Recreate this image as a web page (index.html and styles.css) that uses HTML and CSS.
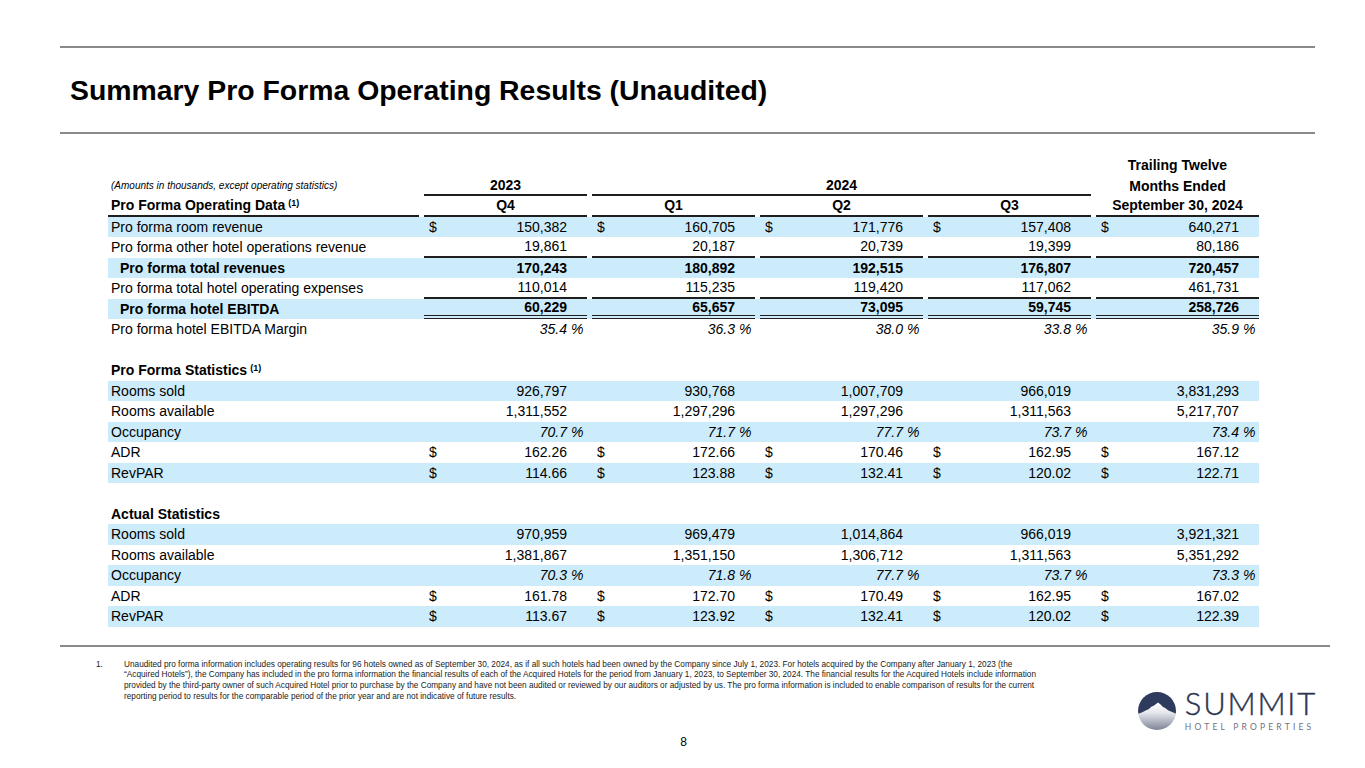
FILE: index.html
```html
<!DOCTYPE html>
<html lang="en">
<head>
<meta charset="utf-8">
<title>Summary Pro Forma Operating Results (Unaudited)</title>
<link rel="stylesheet" href="styles.css">
</head>
<body>
<div class="page">
  <div class="rule rule-top"></div>
  <h1 class="title">Summary Pro Forma Operating Results (Unaudited)</h1>
  <div class="rule"></div>

  <div class="table">
    <div class="row head">
      <div class="c lbl"></div>
      <div class="c"></div><div class="c"></div><div class="c"></div><div class="c"></div>
      <div class="c ctr b">Trailing Twelve</div>
    </div>
    <div class="row head">
      <div class="c lbl note">(Amounts in thousands, except operating statistics)</div>
      <div class="c ctr b line">2023</div>
      <div class="c ctr b line span3">2024</div>
      <div class="c ctr b">Months Ended</div>
    </div>
    <div class="row head">
      <div class="c lbl b line">Pro Forma Operating Data<sup>(1)</sup></div>
      <div class="c ctr b line">Q4</div>
      <div class="c ctr b line">Q1</div>
      <div class="c ctr b line">Q2</div>
      <div class="c ctr b line">Q3</div>
      <div class="c ctr b line">September 30, 2024</div>
    </div>

    <div class="row band">
      <div class="c lbl">Pro forma room revenue</div>
      <div class="c v"><span>$</span><span class="n">150,382</span></div>
      <div class="c v"><span>$</span><span class="n">160,705</span></div>
      <div class="c v"><span>$</span><span class="n">171,776</span></div>
      <div class="c v"><span>$</span><span class="n">157,408</span></div>
      <div class="c v"><span>$</span><span class="n">640,271</span></div>
    </div>
    <div class="row">
      <div class="c lbl">Pro forma other hotel operations revenue</div>
      <div class="c v line"><span class="n">19,861</span></div>
      <div class="c v line"><span class="n">20,187</span></div>
      <div class="c v line"><span class="n">20,739</span></div>
      <div class="c v line"><span class="n">19,399</span></div>
      <div class="c v line"><span class="n">80,186</span></div>
    </div>
    <div class="row band b">
      <div class="c lbl ind">Pro forma total revenues</div>
      <div class="c v"><span class="n">170,243</span></div>
      <div class="c v"><span class="n">180,892</span></div>
      <div class="c v"><span class="n">192,515</span></div>
      <div class="c v"><span class="n">176,807</span></div>
      <div class="c v"><span class="n">720,457</span></div>
    </div>
    <div class="row">
      <div class="c lbl">Pro forma total hotel operating expenses</div>
      <div class="c v line"><span class="n">110,014</span></div>
      <div class="c v line"><span class="n">115,235</span></div>
      <div class="c v line"><span class="n">119,420</span></div>
      <div class="c v line"><span class="n">117,062</span></div>
      <div class="c v line"><span class="n">461,731</span></div>
    </div>
    <div class="row band b">
      <div class="c lbl ind">Pro forma hotel EBITDA</div>
      <div class="c v dbl"><span class="n">60,229</span></div>
      <div class="c v dbl"><span class="n">65,657</span></div>
      <div class="c v dbl"><span class="n">73,095</span></div>
      <div class="c v dbl"><span class="n">59,745</span></div>
      <div class="c v dbl"><span class="n">258,726</span></div>
    </div>
    <div class="row">
      <div class="c lbl">Pro forma hotel EBITDA Margin</div>
      <div class="c v it"><span class="n">35.4<span class="pc">&nbsp;%</span></span></div>
      <div class="c v it"><span class="n">36.3<span class="pc">&nbsp;%</span></span></div>
      <div class="c v it"><span class="n">38.0<span class="pc">&nbsp;%</span></span></div>
      <div class="c v it"><span class="n">33.8<span class="pc">&nbsp;%</span></span></div>
      <div class="c v it"><span class="n">35.9<span class="pc">&nbsp;%</span></span></div>
    </div>

    <div class="row"></div>
    <div class="row">
      <div class="c lbl b">Pro Forma Statistics<sup>(1)</sup></div>
    </div>
    <div class="row band">
      <div class="c lbl">Rooms sold</div>
      <div class="c v"><span class="n">926,797</span></div>
      <div class="c v"><span class="n">930,768</span></div>
      <div class="c v"><span class="n">1,007,709</span></div>
      <div class="c v"><span class="n">966,019</span></div>
      <div class="c v"><span class="n">3,831,293</span></div>
    </div>
    <div class="row">
      <div class="c lbl">Rooms available</div>
      <div class="c v"><span class="n">1,311,552</span></div>
      <div class="c v"><span class="n">1,297,296</span></div>
      <div class="c v"><span class="n">1,297,296</span></div>
      <div class="c v"><span class="n">1,311,563</span></div>
      <div class="c v"><span class="n">5,217,707</span></div>
    </div>
    <div class="row band">
      <div class="c lbl">Occupancy</div>
      <div class="c v it"><span class="n">70.7<span class="pc">&nbsp;%</span></span></div>
      <div class="c v it"><span class="n">71.7<span class="pc">&nbsp;%</span></span></div>
      <div class="c v it"><span class="n">77.7<span class="pc">&nbsp;%</span></span></div>
      <div class="c v it"><span class="n">73.7<span class="pc">&nbsp;%</span></span></div>
      <div class="c v it"><span class="n">73.4<span class="pc">&nbsp;%</span></span></div>
    </div>
    <div class="row">
      <div class="c lbl">ADR</div>
      <div class="c v"><span>$</span><span class="n">162.26</span></div>
      <div class="c v"><span>$</span><span class="n">172.66</span></div>
      <div class="c v"><span>$</span><span class="n">170.46</span></div>
      <div class="c v"><span>$</span><span class="n">162.95</span></div>
      <div class="c v"><span>$</span><span class="n">167.12</span></div>
    </div>
    <div class="row band">
      <div class="c lbl">RevPAR</div>
      <div class="c v"><span>$</span><span class="n">114.66</span></div>
      <div class="c v"><span>$</span><span class="n">123.88</span></div>
      <div class="c v"><span>$</span><span class="n">132.41</span></div>
      <div class="c v"><span>$</span><span class="n">120.02</span></div>
      <div class="c v"><span>$</span><span class="n">122.71</span></div>
    </div>

    <div class="row"></div>
    <div class="row">
      <div class="c lbl b">Actual Statistics</div>
    </div>
    <div class="row band">
      <div class="c lbl">Rooms sold</div>
      <div class="c v"><span class="n">970,959</span></div>
      <div class="c v"><span class="n">969,479</span></div>
      <div class="c v"><span class="n">1,014,864</span></div>
      <div class="c v"><span class="n">966,019</span></div>
      <div class="c v"><span class="n">3,921,321</span></div>
    </div>
    <div class="row">
      <div class="c lbl">Rooms available</div>
      <div class="c v"><span class="n">1,381,867</span></div>
      <div class="c v"><span class="n">1,351,150</span></div>
      <div class="c v"><span class="n">1,306,712</span></div>
      <div class="c v"><span class="n">1,311,563</span></div>
      <div class="c v"><span class="n">5,351,292</span></div>
    </div>
    <div class="row band">
      <div class="c lbl">Occupancy</div>
      <div class="c v it"><span class="n">70.3<span class="pc">&nbsp;%</span></span></div>
      <div class="c v it"><span class="n">71.8<span class="pc">&nbsp;%</span></span></div>
      <div class="c v it"><span class="n">77.7<span class="pc">&nbsp;%</span></span></div>
      <div class="c v it"><span class="n">73.7<span class="pc">&nbsp;%</span></span></div>
      <div class="c v it"><span class="n">73.3<span class="pc">&nbsp;%</span></span></div>
    </div>
    <div class="row">
      <div class="c lbl">ADR</div>
      <div class="c v"><span>$</span><span class="n">161.78</span></div>
      <div class="c v"><span>$</span><span class="n">172.70</span></div>
      <div class="c v"><span>$</span><span class="n">170.49</span></div>
      <div class="c v"><span>$</span><span class="n">162.95</span></div>
      <div class="c v"><span>$</span><span class="n">167.02</span></div>
    </div>
    <div class="row band">
      <div class="c lbl">RevPAR</div>
      <div class="c v"><span>$</span><span class="n">113.67</span></div>
      <div class="c v"><span>$</span><span class="n">123.92</span></div>
      <div class="c v"><span>$</span><span class="n">132.41</span></div>
      <div class="c v"><span>$</span><span class="n">120.02</span></div>
      <div class="c v"><span>$</span><span class="n">122.39</span></div>
    </div>
  </div>

  <div class="rule rule-foot"></div>

  <div class="bottom">
    <div class="footnote">
      <span class="fn-num">1.</span>
      <p class="fn-text">Unaudited pro forma information includes operating results for 96 hotels owned as of September 30, 2024, as if all such hotels had been owned by the Company since July 1, 2023. For hotels acquired by the Company after January 1, 2023 (the<br>“Acquired Hotels”), the Company has included in the pro forma information the financial results of each of the Acquired Hotels for the period from January 1, 2023, to September 30, 2024. The financial results for the Acquired Hotels include information<br>provided by the third-party owner of such Acquired Hotel prior to purchase by the Company and have not been audited or reviewed by our auditors or adjusted by us. The pro forma information is included to enable comparison of results for the current<br>reporting period to results for the comparable period of the prior year and are not indicative of future results.</p>
    </div>
    <div class="logo">
      <svg class="logo-mark" width="38" height="38" viewBox="0 0 40 40" aria-hidden="true">
        <defs>
          <clipPath id="circ"><circle cx="20" cy="20" r="20"/></clipPath>
          <linearGradient id="snow" x1="0" y1="0" x2="0" y2="1">
            <stop offset="0.3" stop-color="#ffffff"/>
            <stop offset="0.55" stop-color="#e4e6ec"/>
            <stop offset="1" stop-color="#7e8497"/>
          </linearGradient>
        </defs>
        <g clip-path="url(#circ)">
          <rect width="40" height="40" fill="url(#snow)"/>
          <path d="M0 0 H40 V23 L36 21 L32 19.5 L29 17 L26 15.5 L23.5 13 L21 11 L19 12.5 L16.5 14.5 L14 15.5 L11.5 18 L8 19.5 L4 21.5 L0 23 Z" fill="#2e3b5c"/>
        </g>
      </svg>
      <div class="logo-text">
        <span class="logo-name">SUMMIT</span>
        <span class="logo-sub">HOTEL PROPERTIES</span>
      </div>
    </div>
  </div>

  <div class="pagenum">8</div>
</div>
</body>
</html>
```

FILE: styles.css
```css
* { box-sizing: border-box; }

html, body {
  margin: 0;
  padding: 0;
  background: #ffffff;
}

body {
  font-family: "Liberation Sans", Arial, sans-serif;
  color: #000000;
}

.page {
  width: 1365px;
  height: 768px;
  overflow: hidden;
}

.rule {
  margin-left: 60px;
  width: 1255px;
  border-top: 2px solid #8a8a8a;
}

.rule-top {
  margin-top: 46px;
}

.title {
  margin: 0 0 0 70px;
  height: 84px;
  display: flex;
  align-items: center;
  padding-top: 1px;
  font-size: 28.4px;
  font-weight: bold;
  letter-spacing: 0;
}

/* ---------- table ---------- */
.table {
  margin: 21px 0 0 108px;
  width: 1151px;
  font-size: 14px;
}

.row {
  display: grid;
  grid-template-columns: 311px repeat(5, 163px);
  column-gap: 5px;
  height: 20.5px;
}

.row.band {
  background: #ccebfb;
}

.c {
  display: flex;
  align-items: center;
  height: 20.5px;
  white-space: nowrap;
}

.lbl {
  padding-left: 3px;
}

.lbl.ind {
  padding-left: 12px;
}

.note {
  font-size: 10px;
  font-style: italic;
}

.b {
  font-weight: bold;
}

.ctr {
  justify-content: center;
}

.span3 {
  grid-column: 3 / 6;
}

.head .c:last-child:not(.line) {
  grid-column: 6;
}

.line {
  border-bottom: 2px solid #1f1f1f;
}

.dbl {
  border-bottom: 4px double #1f1f1f;
}

.v {
  justify-content: space-between;
  padding: 0 20px 0 5px;
}

.v .n {
  margin-left: auto;
}

.it {
  font-style: italic;
}

.pc {
  display: inline-block;
  width: 0;
  white-space: nowrap;
}

sup {
  font-size: 9px;
  font-weight: bold;
  margin-left: 3px;
  position: relative;
  top: -2px;
  vertical-align: super;
  line-height: 0;
}

.rule-foot {
  margin-top: 18px;
  width: 1270px;
}

/* ---------- bottom ---------- */
.bottom {
  display: flex;
  align-items: flex-start;
  padding-left: 96px;
  margin-top: 13px;
}

.footnote {
  display: flex;
  font-size: 8.25px;
  line-height: 10.7px;
  color: #1a1a1a;
}

.fn-num {
  width: 28px;
  flex: none;
}

.fn-text {
  margin: 0;
  white-space: nowrap;
}

.logo {
  margin-left: auto;
  margin-right: 48px;
  margin-top: 28px;
  display: flex;
  align-items: center;
  gap: 9px;
}

.logo-mark {
  display: block;
  flex: none;
  margin-top: 2px;
}

.logo-text {
  display: flex;
  flex-direction: column;
  color: #2c3550;
}

.logo-name {
  font-family: Lato, "Open Sans", sans-serif;
  font-weight: 300;
  font-size: 31px;
  line-height: 31px;
  letter-spacing: 1.8px;
  -webkit-text-stroke: 0.4px #2c3550;
}

.logo-sub {
  font-family: Lato, "Open Sans", sans-serif;
  font-size: 8.5px;
  line-height: 10px;
  margin-top: 3px;
  letter-spacing: 3.2px;
  color: #6e7280;
}

.pagenum {
  text-align: center;
  font-size: 12px;
  line-height: 14px;
  margin-top: 3px;
  padding-left: 2px;
}
```
